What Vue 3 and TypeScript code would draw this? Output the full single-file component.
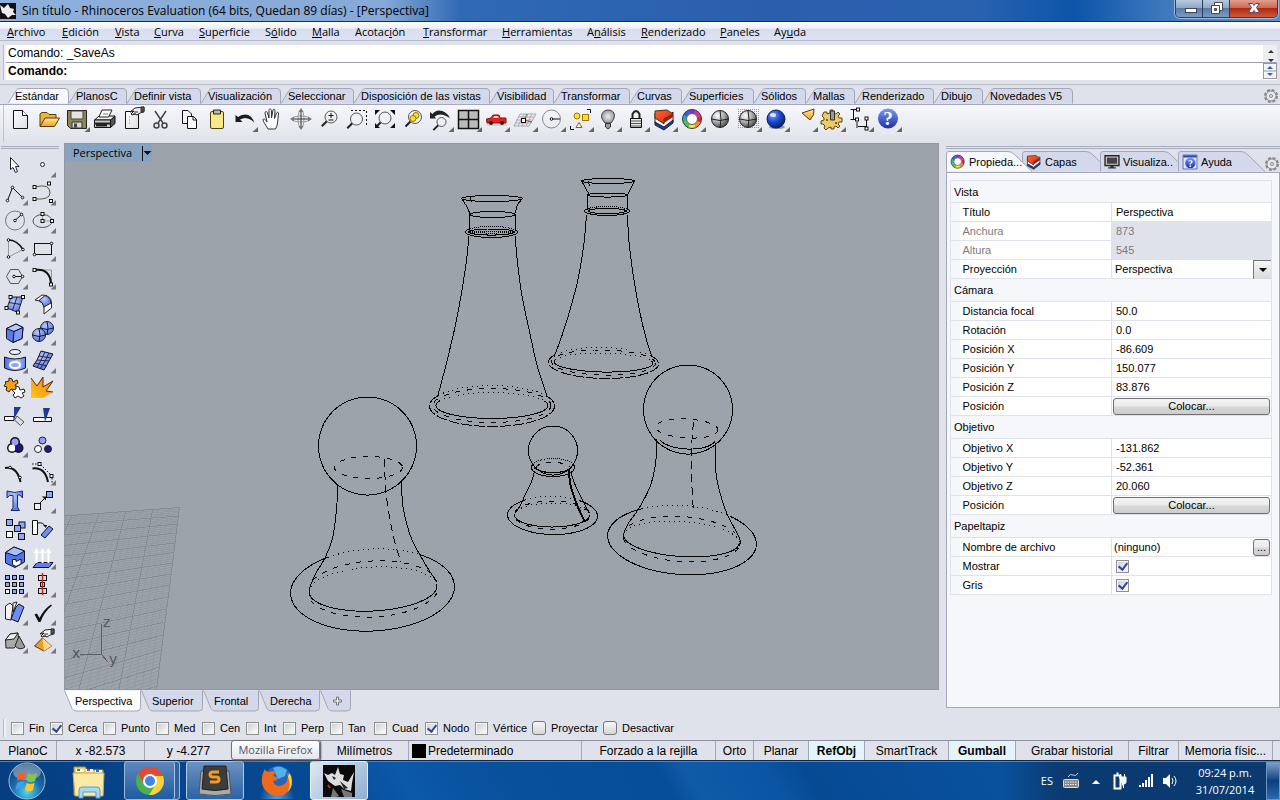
<script setup lang="ts">
import { ref } from 'vue'

type Segment = { text: string; key?: boolean }

function mnemonic(label: string): Segment[] {
  const i = label.indexOf('&')
  return [
    { text: label.slice(0, i) },
    { text: label[i + 1], key: true },
    { text: label.slice(i + 2) },
  ].filter((s) => s.text)
}

const menus = [
  '&Archivo', '&Edición', '&Vista', '&Curva', '&Superficie', 'S&ólido', '&Malla', 'Acotac&ión',
  '&Transformar', '&Herramientas', 'A&nálisis', '&Renderizado', '&Paneles', 'Ay&uda',
].map(mnemonic)

/* ---------- tab shapes ---------- */
interface Tab { label: string; w: number; icon?: string }

const toolTabs: Tab[] = [
  { label: 'Estándar', w: 61 },
  { label: 'PlanosC', w: 58 },
  { label: 'Definir vista', w: 74 },
  { label: 'Visualización', w: 80 },
  { label: 'Seleccionar', w: 73 },
  { label: 'Disposición de las vistas', w: 136 },
  { label: 'Visibilidad', w: 64 },
  { label: 'Transformar', w: 76 },
  { label: 'Curvas', w: 52 },
  { label: 'Superficies', w: 72 },
  { label: 'Sólidos', w: 52 },
  { label: 'Mallas', w: 49 },
  { label: 'Renderizado', w: 79 },
  { label: 'Dibujo', w: 49 },
  { label: 'Novedades V5', w: 90 },
]
const viewTabs: Tab[] = [
  { label: 'Perspectiva', w: 77 },
  { label: 'Superior', w: 62 },
  { label: 'Frontal', w: 56 },
  { label: 'Derecha', w: 61 },
  { label: '', w: 31 },
]
const panelTabs: Tab[] = [
  { label: 'Propieda...', w: 76, icon: 'wheel' },
  { label: 'Capas', w: 78, icon: 'layers' },
  { label: 'Visualiza..', w: 78, icon: 'monitor' },
  { label: 'Ayuda', w: 84, icon: 'helpBook' },
]
const topShape = (w: number) => `M0 15.5L8 2.5Q9.5 .5 12 .5H${w - 4}Q${w - 0.5} .5 ${w - 0.5} 4V15.5`
const bottomShape = (w: number) => `M.5 0L8 18Q9.5 20.5 12 20.5H${w - 4}Q${w - 0.5} 20.5 ${w - 0.5} 17V0`
const panelShape = (w: number, last: boolean) => {
  const top = last ? w - 17 : w - 10
  return `M.5 20.5V3Q.5 .5 3 .5H${top - 4}Q${top} .5 ${top + 3} 4L${top + 20} 20.5`
}

/* ---------- icons ---------- */
const O = 'stroke="#111" fill="none"'
const sq = (x: number, y: number, fill = '#fff', s = 3) =>
  `<rect x="${x - s / 2}" y="${y - s / 2}" width="${s}" height="${s}" fill="${fill}" stroke="#111"/>`
const dot = (x: number, y: number) => `<circle cx="${x}" cy="${y}" r="1.3" fill="#fff" stroke="#111"/>`
const lens = (x: number, y: number, r: number) =>
  `<path d="M${x - r * 0.7} ${y + r * 0.7}L${x - r * 0.7 - 5} ${y + r * 0.7 + 5}" stroke="#222" stroke-width="2"/><circle cx="${x}" cy="${y}" r="${r}" fill="#eef0f4" fill-opacity=".8" stroke="#555"/>`
const globe = (x: number, y: number, r: number, fill: string, line: string) =>
  `<circle cx="${x}" cy="${y}" r="${r}" fill="url(#${fill})" stroke="#222"/><path d="M${x - r} ${y}Q${x} ${y + 3} ${x + r} ${y}M${x} ${y - r}Q${x + 2} ${y} ${x} ${y + r}" fill="none" stroke="${line}"/>`
const pointer = (x: number, y: number) =>
  `<g transform="translate(${x} ${y})"><path d="M0 5L5 1 14 0v5l-4 1-3 2-2-1-3 1-1-1 3-3z" fill="#f2f2f2" stroke="#222"/><path d="M11 0v5l3-1V0zM4 5h4M3 7h3" fill="#555" stroke="#333"/></g>`
const wheelArt = (x: number, y: number, r: number) => {
  const colors = ['#e8252b', '#f0912b', '#f5e63a', '#53c23f', '#25b9b5', '#2d63e0', '#8232c8', '#d52fa0']
  const seg = colors.map((c, i) => {
    const a = ((i * 45 - 22) * Math.PI) / 180
    const b = ((i * 45 + 25) * Math.PI) / 180
    const p = (t: number) => `${(x + r * Math.cos(t)).toFixed(1)} ${(y + r * Math.sin(t)).toFixed(1)}`
    return `<path d="M${p(a)}A${r} ${r} 0 0 1 ${p(b)}" fill="none" stroke="${c}" stroke-width="4"/>`
  })
  return `${seg.join('')}<circle cx="${x}" cy="${y}" r="${r + 2}" fill="none" stroke="#333"/><circle cx="${x}" cy="${y}" r="${r - 2}" fill="#fff" stroke="#555"/>`
}
const layersArt = '<path d="M5 8L15 14 23 7V17L14 24 5 18z" fill="#fff" stroke="#222"/><path d="M5 17L14 22 23 15V18L14 25 5 20z" fill="#1d3e9c" stroke="#222"/><path d="M5 6L17 5 23 9 14 14V19L5 13z" fill="url(#gRed)" stroke="#431"/><path d="M14 14L23 9V12L14 18z" fill="#a01a10"/>'
const helpText = (x: number, y: number, size: number) =>
  `<text x="${x}" y="${y}" font-size="${size}" font-weight="700" font-family="Liberation Serif, serif" text-anchor="middle" fill="#fff">?</text>`

const icons: Record<string, string> = {
  new: '<path d="M7.5 5.500H16.500L21.500 10.500V23.500H7.500z" fill="url(#gPage)" stroke="#111"/><path d="M16.500 5.500V10.500H21.500" fill="#fff" stroke="#111"/>',
  open: '<path d="M6 21V9L8 7.500H13L15 9.500H22V13" fill="#e8b53d" stroke="#5d3a06"/><path d="M6 21.500L11 13H25.500L20.500 21.500z" fill="url(#gFold)" stroke="#5d3a06"/>',
  save: '<path d="M5.500 5.500H24.500V23.500H8.500L5.500 20.500z" fill="#8b8653" stroke="#222"/><path d="M9 6H21V14H9z" fill="#e4e4e0" stroke="#444"/><path d="M10 17H20V23H10z" fill="#d8d8d8" stroke="#333"/><path d="M12 18.500h3v4h-3z" fill="#444"/>',
  print: '<path d="M4.500 15L9 11H25L21 15z" fill="#eee" stroke="#111"/><path d="M9 12L12 5H22L18.500 12z" fill="#fff" stroke="#222"/><path d="M4.500 15H20.500V22.500H4.500z" fill="#ccc" stroke="#111"/><path d="M20.500 15L25 11V18.500L20.500 22.500z" fill="#555" stroke="#111"/><path d="M4 18.500H20.500M6 20.500H17" stroke="#222" stroke-width="2"/><path d="M13 9h5" stroke="#777"/>',
  props: '<path d="M7.500 6.500H20.500V23.500H7.500z" fill="url(#gPage)" stroke="#111"/><path d="M11 12h1M11 15h1M11 18h1" stroke="#888"/>' + pointer(12, 2),
  cut: '<path d="M9 6L17 18M20 6L12 18" stroke="#444" stroke-width="1.5" fill="none"/><circle cx="10.500" cy="20.500" r="2.500" fill="none" stroke="#444" stroke-width="1.5"/><circle cx="18.500" cy="20.500" r="2.500" fill="none" stroke="#444" stroke-width="1.5"/>',
  copy: '<path d="M8.500 5.500H14L17.500 9V18.500H8.500z" fill="#f6f6f8" stroke="#111"/><path d="M13.500 11.500H19.500L22.500 14.500V23.500H13.500z" fill="#fff" stroke="#111"/><path d="M19 11.500V15H22.500" fill="none" stroke="#111"/>',
  paste: '<rect x="8.500" y="6.500" width="13" height="17" rx="1.5" fill="#f7e988" stroke="#4e4310"/><path d="M11.500 5H18.500V9H11.500z" fill="#b9b9b0" stroke="#222"/>',
  undo: '<path d="M5.500 10V17H12.500L10 14.500Q16 11 22 15.500 25 18 24.500 18.500 22 9.500 15 9.500 11 9.500 8 12z" fill="#1c1c1c"/>',
  hand: '<path d="M10 24C8 20 5 17 5 14.500 6 13 8 15 9 17L7 8C7 6 9 6 9.500 8L11 13V5.500C11 3.500 13 3.500 13.500 5.500V13L15 5C15.500 3.500 17 4 17 6L16.500 13.500 18.500 8C19.500 6.500 21 7.500 20.500 9L19.500 18Q19 22 17.500 24z" fill="#fafafa" stroke="#333"/>',
  orbit: '<ellipse cx="15" cy="14" rx="9" ry="3" fill="none" stroke="#999"/><ellipse cx="15" cy="14" rx="3" ry="9" fill="none" stroke="#999"/><path d="M15 7v14M8 14h14" stroke="#333"/><path d="M15 3l2.500 4h-5zM15 25l2.500-4h-5zM4 14l4-2.500v5zM26 14l-4-2.500v5z" fill="#777"/>',
  zoom: lens(17, 12, 6) + '<path d="M17 8v5M14.500 10.500h5M14.500 15h5" stroke="#111"/>',
  zoomWin: '<path d="M9 5.500H24.500V20" fill="none" stroke="#111" stroke-dasharray="2 2"/>' + lens(14.5, 14, 6),
  zoomExt: lens(15, 13, 6) + '<path d="M5 5h5L5 10zM25 5v5l-5-5zM5 23v-5l5 5zM25 23h-5l5-5z" fill="#111"/>',
  zoomSel: lens(17, 12, 6.5) + '<circle cx="18" cy="10.500" r="3" fill="#ffe01b" stroke="#8a7a00"/><circle cx="15" cy="13.500" r="3" fill="#ffe01b" stroke="#8a7a00"/>',
  undoView: '<path d="M4 7V13.500H10L8.500 11.500Q14 7.500 21 11.500L24 13Q20 5.500 13 5.500 9 5.500 6.500 9z" fill="#222"/>' + lens(15.5, 17, 4.5),
  four: '<path d="M4.500 5.500H24.500V23.500H4.500z" fill="#bbb" stroke="#111" stroke-width="1.5"/><path d="M14.500 5V24M4 14.500H25" stroke="#111" stroke-width="1.5"/>',
  car: '<path d="M5 20h20" stroke="#bbb"/><path d="M4.500 14L9 13 11 10H17L18 13H24V18H5z" fill="#e32222" stroke="#8c0c0c"/><path d="M12 11h4l1 2h-6z" fill="#f7c1c1"/><circle cx="9" cy="18" r="2" fill="#222"/><circle cx="20" cy="18" r="2" fill="#222"/>',
  cplane: '<path d="M10 9H26L19 21H4zM8 12H24M6 15H22M5 18H21M14 9L8 21M18 9L12 21M22 9L16 21" fill="none" stroke="#aaa"/><path d="M14 15L22 17" stroke="#d22"/><path d="M14 15L17 9" stroke="#2a9a2a"/>' + sq(13.5, 15.5, '#fff', 4),
  circle: '<circle cx="13.500" cy="14" r="9" fill="none" stroke="#888"/><path d="M13.500 14H22" stroke="#111"/>' + dot(13.5, 14),
  shapes: '<path d="M21 4.500H24.500V8M4.500 21V24.500H8" fill="none" stroke="#111"/><circle cx="11" cy="11" r="3" fill="#ffe02a" stroke="#a67500"/><rect x="16.500" y="9.500" width="6" height="6" fill="#ffe02a" stroke="#a67500"/><path d="M13 17.500L16 22.500H10z" fill="#fff" stroke="#a3521f"/>',
  bulb: '<path d="M11 18Q7 14 7.500 10.500 9 5 14 5 20 5 20.500 10.500 20.500 14 17 18z" fill="url(#gBulb)" stroke="#444"/><path d="M11.500 18.500H16.500V22L14 24 11.500 22z" fill="#999" stroke="#333"/>',
  lock: '<path d="M10.500 14V9Q14 3 17.500 9V14" fill="none" stroke="#222" stroke-width="2"/><path d="M8.500 13.500H19.500V22.500H8.500z" fill="#e6e6e6" stroke="#111"/><path d="M9 16h10M9 18.500h10M9 21h10" stroke="#555"/>',
  layers: layersArt,
  wheel: wheelArt(14, 14, 7.5),
  shaded: globe(14, 14, 8.5, 'gGray', '#222'),
  shadedSel: '<path d="M3 4H25V24H3z" fill="url(#pDots)"/>' + globe(14, 14, 8.5, 'gGray', '#222'),
  render: '<ellipse cx="15" cy="22" rx="8" ry="2" fill="#999"/><circle cx="14" cy="14" r="9" fill="url(#gDeep)" stroke="#0b1a5c"/><ellipse cx="11" cy="10" rx="3" ry="2" fill="#fff" opacity=".8"/>',
  spot: '<path d="M12 8L24 4Q25 10 20 15z" fill="url(#gFold)" stroke="#5d3a06"/>',
  gears: '<path d="M6 7h3v2l3-1V5h3v3l3 1 2-2 2 2-2 2 1 2h3v4h-3l-1 2 2 2-2 2-2-2-2 1v2h-3v-2l-3 1-2 2-2-2 1-2-2-2-2 0v-3l3-1 0-2-2-2z" fill="#e8cb6a" stroke="#5b4408"/><path d="M12.500 6h4v9h-4z" fill="#999" stroke="#333"/><circle cx="9" cy="15" r="1" fill="#5b4408"/><circle cx="18" cy="18" r="1" fill="#5b4408"/>',
  dim: '<path d="M7.500 4.500V14.500M4.500 4.500H12M4.500 14.500H11M11 17V23M20.500 14V24M12 21.500H20" fill="none" stroke="#111"/>' + sq(12, 4.5) + sq(11, 14.5) + sq(20.5, 13.5) + sq(20.5, 23.5),
  help: '<circle cx="14" cy="13.500" r="10" fill="url(#gHelp)"/>' + helpText(14, 20, 19),

  arrow: '<path d="M9.500 7.500V19.500L12 17.500 14.500 22.500 16.500 21.500 14.500 16.500H18z" fill="#fff" stroke="#222"/>',
  point: '<circle cx="13.500" cy="14.500" r="2" fill="#fff" stroke="#222"/>',
  polyline: `<path d="M6.500 22.500L11.500 9.500 21.500 19.500" ${O}/>` + dot(6.5, 22.5) + dot(11.5, 9.5) + dot(21.5, 19.5),
  curve: '<path d="M6 9Q21 5 21 15 21 22 6 21" fill="none" stroke="#555"/>' + sq(5.5, 9) + sq(20, 5.5) + sq(5.5, 21) + sq(22, 23),
  circ: `<circle cx="14" cy="14.500" r="9.500" fill="none" stroke="#777"/><path d="M14 14.500L20.500 8.500" ${O}/>` + dot(14, 14.5) + dot(20.5, 8.5),
  ellipse: '<ellipse cx="13.500" cy="15" rx="9.500" ry="6.500" fill="none" stroke="#555"/><path d="M13.500 8V15H23" fill="none" stroke="#999"/>' + sq(13.5, 15) + sq(13.5, 8) + sq(23, 15),
  arc: '<path d="M7.500 6Q16 6 22 15.500" stroke="#111" stroke-width="1.5" fill="none"/><path d="M7.500 6V23L22 15.500" fill="none" stroke="#999"/>' + dot(7.5, 6) + dot(22, 15.5) + dot(7.5, 23),
  rect: '<rect x="5.500" y="9.500" width="17" height="11" fill="none" stroke="#111"/>' + dot(22.5, 9.5) + dot(5.5, 20.5),
  hex: `<path d="M5.500 14.500L9.500 7.500H17.500L21.500 14.500 17.500 21.500H9.500z" fill="none" stroke="#555"/><path d="M13 14.500H21" ${O}/>` + dot(13, 14.5) + dot(21.5, 14.5),
  fillet: '<path d="M6 8H22.500V22" fill="none" stroke="#999"/><path d="M6 8Q21 6 22 22" fill="none" stroke="#111" stroke-width="2"/>' + sq(5.5, 8) + sq(22, 22.5),
  surf: '<path d="M10 7H22L17 22.500 6 18z" fill="url(#gBlue)" stroke="#223"/><path d="M16 7L11.500 20M8 12.500L20 14.500" stroke="#223"/>' + sq(9.5, 7) + sq(22, 7) + sq(17, 22.5) + sq(5.5, 18),
  sweep: '<path d="M6 10L13 5Q22 5 22.500 13V18L15 24V18Q15 11 6 10z" fill="#fff" stroke="#222"/><path d="M10 10.500L16 5.500Q21 7 22 13L15 17Q14 12 10 10.500z" fill="url(#gBlue)" stroke="#223"/>',
  box: '<path d="M5.500 10.500L15 6 22 9.500 21 20.500 12 24.500 5.500 20.500z" fill="#5b78f0" stroke="#112"/><path d="M5.500 10.500L15 6 22 9.500 13 13.500z" fill="#b9c8ff" stroke="#112"/><path d="M13 13.500L12 24.500 21 20.500 22 9.500z" fill="#7f97f6" stroke="#112"/>',
  spheres: globe(18, 10, 6.5, 'gBlue', '#114') + globe(10, 17, 6.5, 'gBlue', '#114'),
  pipe: '<ellipse cx="14" cy="6" rx="5.500" ry="2.500" fill="#eef" stroke="#222"/><path d="M3.500 11Q14 15 24.500 11V22Q14 27 3.500 22z" fill="url(#gBlueH)" stroke="#112"/><ellipse cx="14" cy="19" rx="5" ry="3" fill="#8fa6f8" stroke="#fff" stroke-width="2"/>',
  mesh: '<path d="M12 5L24 8 20 15 15 24 4 20 8 14z" fill="url(#gBlue)" stroke="#112"/><path d="M8 14L20 15M16 6L12 14 8 22M20 7L16 15 11 23M10 10L22 12M6 17L18 20" fill="none" stroke="#224"/>',
  puzzle: '<path d="M4 8l4-1V4l3 1 1 3 4-2 1 3-3 2 2 3-3 3-3-2-2 3-3-2 1-3-3-1 2-3z" fill="#f6a01a" stroke="#222"/><path d="M11 16l4-1v-3l3 1 1 3 4-1 1 3-3 1 2 3-3 2-3-2-3 2-2-3 2-2z" fill="#fff" stroke="#222"/>',
  explode: '<path d="M2 24V4L8 12 14 3V13L24 7 17 17 24 18 14 24z" fill="url(#gFire)"/><path d="M2 4L8 12 14 3V13L24 7 17 17 24 18" fill="none" stroke="#5a2a00"/>',
  trim: '<path d="M3.500 14.500H13V18.500H3.500z" fill="#fff" stroke="#111"/><path d="M13 5H20L13 17z" fill="#1f3a8f"/><path d="M16 14L23 20 19.500 23.500 13.500 18z" fill="#ddd" stroke="#555"/>',
  split: '<path d="M4.500 15.500H22.500V19.500H4.500z" fill="#fff" stroke="#111"/><path d="M14 6H21L16 20z" fill="#1f3a8f"/>',
  group: '<circle cx="14" cy="12" r="5" fill="#111"/><circle cx="11" cy="18" r="5" fill="#111"/><circle cx="17.500" cy="18" r="5" fill="#111"/><circle cx="14" cy="12" r="3.500" fill="#9c9cff"/><circle cx="11" cy="18" r="3.500" fill="#fff"/><circle cx="17.500" cy="18" r="3.500" fill="#1c1a80"/>',
  ungroup: '<circle cx="13.500" cy="10.500" r="3.500" fill="#9c9cff" stroke="#222"/><circle cx="9" cy="19" r="3.500" fill="#fff" stroke="#222"/><circle cx="19" cy="19" r="3.500" fill="#1c1a80" stroke="#222"/>',
  editPts: '<path d="M4 10Q16 8 19.500 24" fill="none" stroke="#111" stroke-width="2"/>' + dot(9, 9.5) + dot(19, 19.5),
  ctrlPts: '<path d="M3.500 10.500Q16 9 19 24" fill="none" stroke="#111" stroke-width="2"/><path d="M3 6H11L23 18V25" fill="none" stroke="#111" stroke-dasharray="1.5 1.5"/>' + sq(10.5, 6) + sq(22.5, 18),
  text: '<path d="M6 5Q14 8 21.500 5V12L19 9H16.500V21L18.500 24.500H10L12 21.500V9.500H8.500L6 12z" fill="url(#gBlue)" stroke="#1a2a6a"/>',
  move: '<path d="M10 18L17 11" stroke="#111"/><path d="M17 10.500v4l-4-4z" fill="#111"/>' + sq(8.5, 20.5, '#eee', 6) + sq(20.5, 8.5, '#8ea5ff', 6),
  copies: sq(8.5, 8.5, '#8ea5ff', 6) + sq(21, 11, '#8ea5ff', 6) + sq(16.5, 14.5, '#8ea5ff', 6) + sq(8.5, 20.5, '#fff', 6) + sq(20.5, 22.5, '#8ea5ff', 6),
  rotate: '<path d="M3.500 6.500H8.500V20.500H3.500z" fill="#fff" stroke="#111"/><path d="M9 9Q14 8 16 12" fill="none" stroke="#111"/><path d="M17 14l-3-3h4z" fill="#111"/><path d="M12 21L20 12 24 15 16 24z" fill="#6f8df5" stroke="#111"/>',
  solidEdit: '<path d="M4.500 10.500L13 5 23.500 9V20L14 25.500 4.500 21z" fill="#4f74ee" stroke="#112"/><path d="M4.500 10.500L13 5 23.500 9 15 14z" fill="#a9bfff" stroke="#112"/><path d="M11.500 17.500H15V19.500L20 17V22L15 24.500 11.500 22.500z" fill="#fff" stroke="#112"/>',
  extrude: '<path d="M8 20.500H24L20 25.500H4z" fill="#5f7ff2" stroke="#112"/><path d="M7.500 21V9M13.500 21V9M19.500 21V9" stroke="#fff" stroke-width="2"/><path d="M7.500 6l3 5h-6zM13.500 6l3 5h-6zM19.500 6l3 5h-6z" fill="#fff"/>',
  array: [7.5, 14.5, 21.5].map((y) => [6.5, 13.5, 20.5].map((x) => sq(x, y, x === 6.5 && y === 21.5 ? '#fff' : '#8ea5ff', 4)).join('')).join(''),
  align: '<rect x="9.500" y="5.500" width="8" height="5" fill="#ddd" stroke="#111"/><rect x="11.500" y="12.500" width="4" height="4" fill="#ddd" stroke="#111"/><rect x="9.500" y="18.500" width="8" height="5" fill="#ddd" stroke="#111"/><path d="M13.500 3V25" stroke="#d02020" stroke-width="1.5"/>',
  sheets: '<path d="M4.500 8L9 5 12 8 10 22 4.500 21z" fill="#f2f2f2" stroke="#222"/><path d="M12 5L16 4 12 14z" fill="#fff" stroke="#222"/><path d="M15 9L18 6 23 9 17 24 10 21z" fill="#6f8df5" stroke="#112"/>',
  check: '<path d="M5.500 16.500L8 15.500 10.500 20Q15 11 22 6.500L23 7.500Q15 14 11.500 24H9.500z" fill="#111"/>',
  solids: '<path d="M4.500 14L9 8 17 7 18 17 13 22H5z" fill="#aaa" stroke="#222"/><path d="M4.500 14L13 13 17 7 9 8z" fill="#eee" stroke="#222"/><path d="M18 10L24 21Q19 25 14 20z" fill="#999" stroke="#222"/>',
  pyramid: '<path d="M13.500 12L22.500 20 15 25 5.500 20z" fill="#e89f2c" stroke="#5d3a06"/><path d="M13.500 12L22.500 20 15 25z" fill="#ffd98c"/>' + pointer(11, 3),
  monitor: '<path d="M4.500 5.500H24.500V19.500H4.500z" fill="#ddd" stroke="#222" stroke-width="2"/><path d="M7 8H22V17H7z" fill="#444"/><path d="M12 20h5v2h3v2H9v-2h3z" fill="#333"/>',
  helpBook: '<path d="M4.500 4.500H24.500V24.500H4.500z" fill="#dfe8ff" stroke="#2b4590"/><path d="M5 5H24V8H5z" fill="#1d45c0"/><circle cx="15" cy="16" r="7.500" fill="url(#gHelp)"/>' + helpText(15, 21, 14),
}

interface Tool { icon: string; name: string; more?: boolean }
const tool = (spec: string): Tool => {
  const more = spec.endsWith('+')
  const [icon, name] = spec.replace('+', '').split(':')
  return { icon, name, more }
}
const standardTools = [
  'new:Nuevo', 'open:Abrir', 'save:Guardar+', 'print:Imprimir', 'props:Propiedades', 'cut:Cortar', 'copy:Copiar',
  'paste:Pegar', 'undo:Deshacer+', 'hand:Encuadrar', 'orbit:Rotar vista', 'zoom:Zoom dinámico', 'zoomWin:Zoom ventana',
  'zoomExt:Zoom extensión', 'zoomSel:Zoom selección', 'undoView:Deshacer vista+', 'four:Cuatro vistas+', 'car:Vista lateral+',
  'cplane:Plano de construcción+', 'circle:Referencias+', 'shapes:Seleccionar+', 'bulb:Ocultar+', 'lock:Bloquear+',
  'layers:Capas+', 'wheel:Propiedades de objeto+', 'shaded:Sombreado', 'shadedSel:Sombrear selección+', 'render:Renderizar+',
  'spot:Foco+', 'gears:Opciones+', 'dim:Acotar+', 'help:Ayuda+',
].map(tool)
const sideTools = [
  'arrow:Selección', 'point:Punto+', 'polyline:Polilínea+', 'curve:Curva+', 'circ:Círculo+', 'ellipse:Elipse+', 'arc:Arco+',
  'rect:Rectángulo+', 'hex:Polígono+', 'fillet:Empalme+', 'surf:Superficie+', 'sweep:Barrido+', 'box:Caja+', 'spheres:Booleana+',
  'pipe:Proyectar curva+', 'mesh:Malla+', 'puzzle:Unir', 'explode:Descomponer', 'trim:Recortar', 'split:Partir', 'group:Agrupar+',
  'ungroup:Desagrupar', 'editPts:Puntos de edición', 'ctrlPts:Puntos de control+', 'text:Texto', 'move:Mover+', 'copies:Copiar objetos',
  'rotate:Rotar', 'solidEdit:Editar sólido+', 'extrude:Extruir+', 'array:Matriz+', 'align:Alinear+', 'sheets:Desplegar+',
  'check:Comprobar+', 'solids:Sólidos+', 'pyramid:Pirámide+',
].map(tool)

/* ---------- viewport wireframes ---------- */
type Pt = [number, number]
interface Ring { c: Pt; r: Pt; rot?: number; from?: number; to?: number; line?: string }
interface Stroke { d: string; line: string }

function ring({ c, r, rot = 0, from = 0, to = 360, line = 'solid' }: Ring): Stroke {
  const t = (rot * Math.PI) / 180
  const pts: string[] = []
  const n = Math.ceil((to - from) / 4)
  for (let i = 0; i <= n; i++) {
    const a = ((from + ((to - from) * i) / n) * Math.PI) / 180
    const x = r[0] * Math.cos(a)
    const y = r[1] * Math.sin(a)
    pts.push(`${(c[0] + x * Math.cos(t) - y * Math.sin(t)).toFixed(1)} ${(c[1] + x * Math.sin(t) + y * Math.cos(t)).toFixed(1)}`)
  }
  return { d: 'M' + pts.join('L'), line }
}

/* smooth curve through the given points */
function spline(line: string, ...p: Pt[]): Stroke {
  let d = `M${p[0].join(' ')}`
  for (let i = 0; i < p.length - 1; i++) {
    const a = p[i - 1] ?? p[i]
    const b = p[i]
    const c = p[i + 1]
    const e = p[i + 2] ?? c
    d += `C${[b[0] + (c[0] - a[0]) / 6, b[1] + (c[1] - a[1]) / 6, c[0] - (e[0] - b[0]) / 6, c[1] - (e[1] - b[1]) / 6, ...c]
      .map((v) => v.toFixed(1)).join(' ')}`
  }
  return { d, line }
}

const strokes: Stroke[] = [
  // pawn, left
  ring({ c: [367.5, 446], r: [49, 49] }),
  ring({ c: [368.5, 467.5], r: [34, 11], line: 'dash' }),
  spline('fall', [384.5, 459], [385, 477], [386, 493], [390, 520], [395, 543], [401, 562]),
  spline('solid', [337.5, 484], [337, 503], [335, 523], [332, 540], [325, 558], [316, 573], [310, 587], [309, 592]),
  spline('solid', [401.5, 481], [402.5, 503], [406.5, 523], [412, 540], [419.5, 554], [427, 567], [437, 582]),
  ring({ c: [373, 589], r: [64, 22], rot: -3, from: -5, to: 183 }),
  ring({ c: [373, 589], r: [64, 22], rot: -3, from: 183, to: 355, line: 'dots' }),
  ring({ c: [373, 589], r: [66, 28], rot: -3, from: 15, to: 168, line: 'dash' }),
  ring({ c: [373, 589], r: [66, 28], rot: -3, from: 205, to: 335, line: 'dash' }),
  ring({ c: [372.5, 590], r: [82, 41], rot: -3, from: -53, to: 239 }),
  ring({ c: [372.5, 590], r: [82, 41], rot: -3, from: 239, to: 307, line: 'dots' }),
  // pawn, right
  ring({ c: [688, 409.5], r: [44.5, 44.5] }),
  ring({ c: [687, 428.5], r: [31, 9.5], rot: 3, line: 'dash' }),
  ring({ c: [687, 437], r: [29, 12], rot: 3, from: 15, to: 160 }),
  spline('fall', [693.5, 422], [692, 440], [691.5, 467], [692, 488], [693.5, 512]),
  spline('solid', [656.5, 439], [656.5, 453], [654.5, 470], [649.5, 488], [638.5, 509], [628.5, 523], [623.5, 535], [624.5, 541]),
  spline('solid', [715.5, 443], [716, 473], [720, 493], [727.5, 515], [739.5, 538], [739.5, 546]),
  ring({ c: [681.5, 539], r: [58, 17.5], rot: 4, from: 0, to: 180 }),
  ring({ c: [681.5, 539], r: [58, 17.5], rot: 4, from: 180, to: 360, line: 'dots' }),
  ring({ c: [681.5, 539], r: [59, 22.5], rot: 4, from: 12, to: 165, line: 'dash' }),
  ring({ c: [681.5, 539], r: [59, 22.5], rot: 4, from: 205, to: 335, line: 'dash' }),
  ring({ c: [682, 540], r: [74.5, 34.5], rot: 4, from: -52, to: 236 }),
  ring({ c: [682, 540], r: [74.5, 34.5], rot: 4, from: 236, to: 308, line: 'dots' }),
  // pawn, small
  ring({ c: [553, 450.5], r: [24.5, 24.5] }),
  ring({ c: [553, 467.5], r: [21.5, 9], from: -20, to: 200 }),
  ring({ c: [553, 467.5], r: [21.5, 9], from: 200, to: 340, line: 'tight' }),
  ring({ c: [553, 467.5], r: [17, 5], from: 0, to: 180 }),
  ring({ c: [553, 467.5], r: [17, 5], from: 180, to: 360, line: 'dash' }),
  ring({ c: [553, 466], r: [19, 7], from: 10, to: 170, line: 'dash' }),
  spline('solid', [534, 473], [531.5, 482], [526, 493], [520, 506], [515, 513]),
  spline('solid', [571, 473], [576, 487], [585, 505], [589.5, 513]),
  spline('bold', [568.5, 469], [571, 487], [577.5, 506], [584.5, 521]),
  ring({ c: [552, 515], r: [37.5, 12], from: 0, to: 180 }),
  ring({ c: [552, 515], r: [37.5, 12], from: 180, to: 360, line: 'dots' }),
  ring({ c: [552, 515], r: [38, 14], from: 15, to: 165, line: 'dash' }),
  ring({ c: [552, 515], r: [38, 14], from: 195, to: 345, line: 'dash' }),
  ring({ c: [552.5, 515.5], r: [45, 19], rot: 1, from: -55, to: 232 }),
  ring({ c: [552.5, 515.5], r: [45, 19], rot: 1, from: 232, to: 305, line: 'dots' }),
  // vase, left
  ring({ c: [492, 198.5], r: [30.5, 3] }),
  spline('solid', [462, 199], [467, 207], [470, 214]),
  spline('solid', [522, 199], [517.5, 205], [515.5, 213]),
  spline('dash', [470, 197], [473, 206]),
  ring({ c: [492.5, 214.5], r: [22.5, 3] }),
  spline('solid', [469.5, 214], [469.5, 231]),
  spline('solid', [515.5, 214], [515.5, 231]),
  ring({ c: [491.5, 232], r: [26, 5.5], from: -25, to: 205 }),
  ring({ c: [491.5, 232], r: [26, 5.5], from: 205, to: 335, line: 'tight' }),
  ring({ c: [491.5, 232], r: [23, 3] }),
  ring({ c: [491.5, 232], r: [21, 1], line: 'tight' }),
  spline('solid', [469, 236], [466.5, 260], [461.5, 293], [455, 327], [446.5, 363], [437.5, 397]),
  spline('solid', [515.5, 236], [516.5, 253], [521.5, 293], [528.5, 327], [537.5, 367], [547.5, 397]),
  ring({ c: [492, 405.5], r: [56, 13], from: -20, to: 200 }),
  ring({ c: [492, 405.5], r: [56, 13], from: 200, to: 340, line: 'dots' }),
  ring({ c: [492, 405.5], r: [59, 17], line: 'dash' }),
  ring({ c: [492, 406], r: [62.5, 20.5], from: -31, to: 211, line: 'long' }),
  ring({ c: [492, 406], r: [62.5, 20.5], from: 211, to: 329, line: 'dots' }),
  // vase, right
  ring({ c: [608, 181], r: [26.5, 2.5] }),
  spline('solid', [582, 181.5], [586.5, 190], [590, 195]),
  spline('solid', [634, 182], [629.5, 191], [627.5, 195]),
  spline('dash', [588, 181], [591, 190]),
  ring({ c: [607.5, 195], r: [20, 2] }),
  spline('solid', [587.5, 195], [587.5, 210]),
  spline('solid', [627.5, 195], [627.5, 210]),
  ring({ c: [607, 211], r: [22.5, 4.5], from: -25, to: 205 }),
  ring({ c: [607, 211], r: [22.5, 4.5], from: 205, to: 335, line: 'tight' }),
  ring({ c: [607, 211], r: [19, 2.5] }),
  spline('solid', [586.5, 215], [584, 243], [578.5, 277], [570, 310], [561.5, 337], [554, 357]),
  spline('solid', [627.5, 215], [629, 242], [633.5, 277], [640, 313], [646.5, 340], [652, 357]),
  ring({ c: [603.5, 362.5], r: [49.5, 9.5], rot: 1, from: -15, to: 195 }),
  ring({ c: [603.5, 362.5], r: [49.5, 9.5], rot: 1, from: 195, to: 345, line: 'dots' }),
  ring({ c: [603.5, 362.5], r: [52, 12.5], rot: 1, line: 'dash' }),
  ring({ c: [603.5, 363], r: [55, 15.5], rot: 1, from: -31, to: 211, line: 'long' }),
  ring({ c: [603.5, 363], r: [55, 15.5], rot: 1, from: 211, to: 329, line: 'dots' }),
]

/* construction plane grid, clipped at the viewport's edges */
const corner: Pt = [179.5, 507.5]
const foot: Pt = [156.5, 690]
const rowRight = [507.5, 516, 524, 533, 543, 552.5, 563, 574, 585, 597, 609, 622, 635, 650, 667, 686, 706]
const rowLeft = [516, 525, 535, 545.5, 556, 567.5, 579, 591.5, 604.5, 617.5, 631, 645, 660, 678, 697, 717, 738]
const edgeX = (y: number) => corner[0] + ((foot[0] - corner[0]) * (y - corner[1])) / (foot[1] - corner[1])
const rowLine = (l: number, r: number) => `M64 ${l.toFixed(1)}L${edgeX(r).toFixed(1)} ${r.toFixed(1)}`
const colLine = (i: number) => `M${corner[0] - 26.8 * i} ${corner[1] + 1.9 * i}L${foot[0] - 36.5 * i - i * i * 1.2} ${foot[1]}`
const gridMajor = [
  ...rowRight.map((r, i) => rowLine(rowLeft[i], r)),
  ...[0, 1, 2, 3, 4].map(colLine),
].join('')
const gridMinor = [
  ...rowRight.slice(0, -1).flatMap((r, i) =>
    [0.2, 0.4, 0.6, 0.8].map((k) => rowLine(rowLeft[i] + (rowLeft[i + 1] - rowLeft[i]) * k, r + (rowRight[i + 1] - r) * k)),
  ),
  ...Array.from({ length: 24 }, (_, i) => colLine(i / 5)),
].join('')

/* ---------- properties ---------- */
interface Prop { label: string; kind?: 'text' | 'disabled' | 'select' | 'button' | 'file' | 'check'; value?: string }
interface Section { title: string; rows: Prop[] }
const sections: Section[] = [
  { title: 'Vista', rows: [
    { label: 'Título', value: 'Perspectiva' },
    { label: 'Anchura', value: '873', kind: 'disabled' },
    { label: 'Altura', value: '545', kind: 'disabled' },
    { label: 'Proyección', value: 'Perspectiva', kind: 'select' },
  ] },
  { title: 'Cámara', rows: [
    { label: 'Distancia focal', value: '50.0' },
    { label: 'Rotación', value: '0.0' },
    { label: 'Posición X', value: '-86.609' },
    { label: 'Posición Y', value: '150.077' },
    { label: 'Posición Z', value: '83.876' },
    { label: 'Posición', value: 'Colocar...', kind: 'button' },
  ] },
  { title: 'Objetivo', rows: [
    { label: 'Objetivo X', value: '-131.862' },
    { label: 'Objetivo Y', value: '-52.361' },
    { label: 'Objetivo Z', value: '20.060' },
    { label: 'Posición', value: 'Colocar...', kind: 'button' },
  ] },
  { title: 'Papeltapiz', rows: [
    { label: 'Nombre de archivo', value: '(ninguno)', kind: 'file' },
    { label: 'Mostrar', kind: 'check' },
    { label: 'Gris', kind: 'check' },
  ] },
]

const snaps = ref([
  { label: 'Fin', on: false }, { label: 'Cerca', on: true }, { label: 'Punto', on: false }, { label: 'Med', on: false },
  { label: 'Cen', on: false }, { label: 'Int', on: false }, { label: 'Perp', on: false }, { label: 'Tan', on: false },
  { label: 'Cuad', on: false }, { label: 'Nodo', on: true }, { label: 'Vértice', on: false },
  { label: 'Proyectar', on: false, push: true }, { label: 'Desactivar', on: false, push: true },
])

const status = [
  { text: 'PlanoC' }, { text: 'x -82.573' }, { text: 'y -4.277' }, { text: '' }, { text: 'Milímetros' },
  { text: 'Predeterminado', swatch: true }, { text: 'Forzado a la rejilla' }, { text: 'Orto' }, { text: 'Planar' },
  { text: 'RefObj', on: true }, { text: 'SmartTrack' }, { text: 'Gumball', on: true }, { text: 'Grabar historial' },
  { text: 'Filtrar' }, { text: 'Memoria físic...' },
]
</script>

<template>
  <div class="app">
    <svg class="defs" width="0" height="0" aria-hidden="true">
      <defs>
        <linearGradient id="gPage" x1="0" y1="0" x2="1" y2="1"><stop offset="0" stop-color="#fff" /><stop offset="1" stop-color="#dcdde2" /></linearGradient>
        <linearGradient id="gFold" x1="0" y1="0" x2="0" y2="1"><stop offset="0" stop-color="#ffe9a0" /><stop offset="1" stop-color="#f0a018" /></linearGradient>
        <linearGradient id="gRed" x1="0" y1="0" x2="1" y2="1"><stop offset="0" stop-color="#ff6a33" /><stop offset="1" stop-color="#d81c10" /></linearGradient>
        <radialGradient id="gBulb"><stop offset="0" stop-color="#eee" /><stop offset="1" stop-color="#999" /></radialGradient>
        <radialGradient id="gGray" cx=".35" cy=".3" r=".8"><stop offset="0" stop-color="#fff" /><stop offset=".5" stop-color="#aaa" /><stop offset="1" stop-color="#333" /></radialGradient>
        <radialGradient id="gDeep" cx=".35" cy=".3" r=".8"><stop offset="0" stop-color="#6d9bff" /><stop offset=".5" stop-color="#1b45c8" /><stop offset="1" stop-color="#081858" /></radialGradient>
        <radialGradient id="gBlue" cx=".4" cy=".3" r=".8"><stop offset="0" stop-color="#b9c9ff" /><stop offset="1" stop-color="#4a68e0" /></radialGradient>
        <linearGradient id="gBlueH"><stop offset="0" stop-color="#4a6ae8" /><stop offset=".6" stop-color="#b9c9ff" /><stop offset="1" stop-color="#6080ee" /></linearGradient>
        <linearGradient id="gHelp" x1="0" y1="0" x2="0" y2="1"><stop offset="0" stop-color="#7c98ee" /><stop offset="1" stop-color="#1d2fa8" /></linearGradient>
        <linearGradient id="gFire" x1="1" y1="0" x2="0" y2="1"><stop offset="0" stop-color="#ff7a00" /><stop offset="1" stop-color="#ffc81e" /></linearGradient>
        <pattern id="pDots" width="2" height="2" patternUnits="userSpaceOnUse"><rect width="1" height="1" fill="#999" /></pattern>
      </defs>
    </svg>

    <header class="titlebar">
      <svg class="app-icon" viewBox="0 0 16 16" aria-hidden="true"><rect width="16" height="16" fill="#111" /><path d="M0 2L4 5 8 1 10 5 14 6 13 9 16 12 12 12 8 15 5 11 2 10z" fill="#eee" /></svg>
      <h1>Sin título - Rhinoceros Evaluation (64 bits, Quedan 89 días) - [Perspectiva]</h1>
      <div class="win-buttons">
        <button type="button" aria-label="Minimizar"><svg viewBox="0 0 28 17"><rect x="9.500" y="8.500" width="11" height="4" fill="#fff" stroke="#445" /></svg></button>
        <button type="button" aria-label="Restaurar"><svg viewBox="0 0 28 17"><path d="M11.500 2.500H19.500V10.500H11.500z" fill="#fff" stroke="#445" /><path d="M8.500 5.500H16.500V13.500H8.500z" fill="#fff" stroke="#445" /><path d="M11.500 8.500H13.500V10.500H11.500z" fill="#678" stroke="#445" /></svg></button>
        <button type="button" class="close" aria-label="Cerrar"><svg viewBox="0 0 47 17"><path d="M18.500 3.500H22.500L24 5.500 25.500 3.500H29.500L26.500 7.500 29.500 12.500H25.500L24 10.500 22.500 12.500H18.500L21.500 7.500z" fill="#fff" stroke="#645" /></svg></button>
      </div>
    </header>

    <nav class="menu">
      <button v-for="(m, i) in menus" :key="i" type="button"><span v-for="(s, j) in m" :key="j" :class="{ key: s.key }">{{ s.text }}</span></button>
    </nav>

    <section class="command">
      <div class="history">Comando: _SaveAs<svg viewBox="0 0 14 17" aria-hidden="true"><rect width="14" height="17" fill="#eee" /><path d="M5 8h6L8 5zM5 14h6l-3 3z" fill="#333" /></svg></div>
      <div class="prompt">
        <label for="cmd">Comando:</label><input id="cmd" type="text" />
        <svg viewBox="0 0 14 17" aria-hidden="true"><rect x=".5" y=".5" width="13" height="15" fill="#f4f5f8" stroke="#999" /><path d="M0 8h14" stroke="#999" /><path d="M4 6h6L7 3zM4 10h6l-3 3z" fill="#3b5bb8" /></svg>
      </div>
    </section>

    <section class="toolbar">
      <div class="tool-tabs">
        <button v-for="(t, i) in toolTabs" :key="t.label" type="button" class="tab" :class="{ active: i === 0 }" :style="{ width: t.w + 'px' }">
          <svg class="tab-shape" :viewBox="`0 0 ${t.w} 16`" aria-hidden="true"><path :d="topShape(t.w)" /></svg>
          <span>{{ t.label }}</span>
        </button>
        <button type="button" class="gear" aria-label="Opciones de barra"><svg viewBox="0 0 16 16"><circle cx="8" cy="8" r="6" fill="none" stroke="#888" stroke-width="2" stroke-dasharray="3 1.700" /><circle cx="8" cy="8" r="5" fill="#e8e9ee" stroke="#888" /><circle cx="8" cy="8" r="1.500" fill="none" stroke="#888" /></svg></button>
      </div>
      <div class="tools">
        <button v-for="t in standardTools" :key="t.name" type="button" class="tool" :aria-label="t.name">
          <svg viewBox="0 0 28 28"><g v-html="icons[t.icon]" /><path v-if="t.more" d="M28 22V27H22.500z" fill="#666" /></svg>
        </button>
      </div>
    </section>

    <main class="work">
      <aside class="side-tools">
        <div class="side-grid">
          <button v-for="t in sideTools" :key="t.name" type="button" class="tool" :aria-label="t.name">
            <svg viewBox="0 0 28 28"><g v-html="icons[t.icon]" /><path v-if="t.more" d="M27 22V27.500H21.500z" fill="#777" /></svg>
          </button>
        </div>
      </aside>

      <section class="center">
        <div class="viewport">
          <svg class="scene" viewBox="64 143 875 546" preserveAspectRatio="xMinYMin meet">
            <path class="minor" :d="gridMinor" />
            <path class="major" :d="gridMajor" />
            <path v-for="(s, i) in strokes" :key="i" :d="s.d" class="wire" :class="s.line" />
            <path class="axis" d="M101.500 624V654.500H80M101.500 654.500L108 662" />
            <g class="axis-label"><text x="72" y="658">x</text><text x="103" y="627">z</text><text x="109" y="664">y</text></g>
          </svg>
          <button type="button" class="view-title"><span>Perspectiva</span><svg viewBox="0 0 11 18" aria-hidden="true"><path d="M1.500 2V17" stroke="#111" /><path d="M2.500 7H10.500L6.500 11z" fill="#111" /></svg></button>
        </div>
        <div class="view-tabs">
          <button v-for="(t, i) in viewTabs" :key="i" type="button" class="tab" :class="{ active: i === 0 }" :style="{ width: t.w + 'px' }" :aria-label="t.label || 'Nueva vista'">
            <svg class="tab-shape" :viewBox="`0 0 ${t.w} 21`" aria-hidden="true"><path :d="bottomShape(t.w)" /><path v-if="!t.label" class="plus" d="M16.500 6.500H18.500V9.500H21.500V11.500H18.500V14.500H16.500V11.500H13.500V9.500H16.500z" /></svg>
            <span>{{ t.label }}</span>
          </button>
        </div>
      </section>

      <aside class="panel">
        <div class="panel-tabs">
          <button v-for="(t, i) in panelTabs" :key="t.label" type="button" class="tab" :class="{ active: i === 0 }" :style="{ width: t.w + 'px' }">
            <svg class="tab-shape" :viewBox="`0 0 ${t.w} 21`" aria-hidden="true"><path :d="panelShape(t.w, i === 3)" /></svg>
            <svg class="tab-icon" viewBox="3 3 23 23" aria-hidden="true" v-html="icons[t.icon ?? '']" />
            <span>{{ t.label }}</span>
          </button>
          <button type="button" class="gear" aria-label="Opciones de panel"><svg viewBox="0 0 16 16"><circle cx="8" cy="8" r="6" fill="none" stroke="#888" stroke-width="2" stroke-dasharray="3 1.700" /><circle cx="8" cy="8" r="5" fill="#e8e9ee" stroke="#888" /><circle cx="8" cy="8" r="1.500" fill="none" stroke="#888" /></svg></button>
        </div>
        <div class="panel-body">
          <table>
            <colgroup><col class="c-gutter" /><col class="c-name" /><col /></colgroup>
            <tbody v-for="(s, si) in sections" :key="s.title">
              <tr class="section"><th colspan="3" scope="rowgroup">{{ s.title }}</th></tr>
              <tr v-for="(r, ri) in s.rows" :key="ri" :class="{ off: r.kind === 'disabled' }">
                <td class="gutter"></td>
                <th scope="row"><label :for="`p-${si}-${ri}`">{{ r.label }}</label></th>
                <td class="value">
                  <button v-if="r.kind === 'button'" :id="`p-${si}-${ri}`" type="button" class="push">{{ r.value }}</button>
                  <div v-else-if="r.kind === 'select'" class="drop"><select :id="`p-${si}-${ri}`"><option>{{ r.value }}</option></select></div>
                  <input v-else-if="r.kind === 'check'" :id="`p-${si}-${ri}`" type="checkbox" class="tick" checked />
                  <div v-else-if="r.kind === 'file'" class="file"><input :id="`p-${si}-${ri}`" type="text" :value="r.value" /><button type="button" class="push">...</button></div>
                  <input v-else :id="`p-${si}-${ri}`" type="text" :value="r.value" :disabled="r.kind === 'disabled'" />
                </td>
              </tr>
            </tbody>
          </table>
        </div>
      </aside>
    </main>

    <section class="snaps">
      <label v-for="s in snaps" :key="s.label"><input v-model="s.on" type="checkbox" :class="s.push ? 'pushbox' : 'tick'" /><span>{{ s.label }}</span></label>
    </section>

    <section class="status">
      <button v-for="(s, i) in status" :key="i" type="button" :class="{ on: s.on, layer: s.swatch }"><i v-if="s.swatch" class="swatch"></i>{{ s.text }}</button>
      <div class="tip" role="tooltip">Mozilla Firefox</div>
    </section>

    <footer class="taskbar">
      <button type="button" class="start" aria-label="Inicio">
        <svg viewBox="0 0 40 40"><defs><radialGradient id="orb" cx=".5" cy=".8" r=".8"><stop offset="0" stop-color="#4fd8f5" /><stop offset=".5" stop-color="#1c6ba8" /><stop offset="1" stop-color="#123a68" /></radialGradient></defs><circle cx="20" cy="20" r="18" fill="url(#orb)" stroke="#9cc4e0" /><ellipse cx="20" cy="11" rx="14" ry="8" fill="#fff" opacity=".35" /><path d="M11 13Q15 10 19 12L18 19Q14 17 10 20z" fill="#f0602a" /><path d="M21 12Q25 15 30 12L28 20Q24 22 20 20z" fill="#8cc63e" /><path d="M10 22Q14 19 17.500 21L16 28Q12 26 8.500 29z" fill="#3aa0e8" /><path d="M19.500 22Q23 24 27.500 22L26 29Q22 32 18 29z" fill="#fdc82a" /></svg>
      </button>
      <button type="button" class="task plain explorer" aria-label="Explorador">
        <svg viewBox="0 0 40 40"><path d="M5 6H16L18 9H34V34H5z" fill="#e9cf7c" stroke="#b3913d" /><path d="M7 8h8v3H7zM17 8h7v3h-7zM26 9h7v3h-7z" fill="#fff" /><path d="M8 8h3v2H8z" fill="#2a9a2a" /><path d="M18 8h3v2h-3z" fill="#d33" /><path d="M27 9h3v2h-3z" fill="#36c" /><path d="M4 12H35L34 35H6z" fill="#fbe9a6" stroke="#c9a64c" /><path d="M10 37V29Q10 26 13 26H28Q31 26 31 29V37H27V31H14V37z" fill="#a7d8f2" stroke="#5a9cc4" /></svg>
      </button>
      <button type="button" class="task stacked" aria-label="Chrome">
        <svg viewBox="0 0 40 40"><circle cx="18" cy="20" r="14" fill="#4caf50" /><path d="M6 12.500A14 14 0 0 1 30 12.500L31 15H18L12 23z" fill="#dd4b39" /><path d="M31 15A14 14 0 0 1 17 34L24 23 23 15z" fill="#fdd23e" /><circle cx="18" cy="20" r="7" fill="#fff" /><circle cx="18" cy="20" r="5" fill="#3f86e8" /></svg>
      </button>
      <button type="button" class="task open" aria-label="Sublime Text">
        <svg viewBox="0 0 40 40"><path d="M6 10H34L36 33Q20 36 4 33z" fill="#aaa" stroke="#555" /><path d="M9 5H31L33 28Q20 31 7 28z" fill="#3c3c3c" stroke="#222" /><path d="M24 11H18Q15 11 15 13.500T18 16H21Q24 16 24 18.500T21 21H15" fill="none" stroke="#f59a23" stroke-width="3" /></svg>
      </button>
      <button type="button" class="task plain glow" aria-label="Mozilla Firefox">
        <svg viewBox="0 0 40 40"><circle cx="21" cy="19" r="14" fill="#2a64b8" /><path d="M16 7Q23 3 30 9L28 15 21 18z" fill="#4fb2e8" /><path d="M8 8Q9 11 12 11 16 9 19 11L16 15Q22 16 20 19L16 20Q17 25 23 25 30 24 31 16L30 12Q36 18 34 26 29 36 19 35 8 33 5 23 4 14 8 8z" fill="#ee6b1e" /><path d="M34 15Q37 24 31 31 34 22 31 16L32 12z" fill="#ffd13b" /></svg>
      </button>
      <button type="button" class="task open current" aria-label="Rhinoceros">
        <svg viewBox="0 0 40 40"><path d="M4 4H36V36H4z" fill="#0b0b0b" /><path d="M5 12L9 14 13 12 16 14 19 6 21 13 25 14 24 19 29 21 35 11 33 22 32 30 25 28 21 24 16 25 9 20z" fill="#ddd" /><path d="M13 15L17 17 15 19zM21 20L29 27 25 28z" fill="#222" /><path d="M14 27L20 35 17 36H12zM22 28L33 32V36H25z" fill="#777" /><path d="M9 24l2 3" stroke="#d22" stroke-width="2" /></svg>
      </button>
      <div class="tray">
        <span class="lang">ES</span>
        <svg class="keyb" viewBox="0 0 16 18" aria-hidden="true"><path d="M5 5Q7 1 10 3T15 1" fill="none" stroke="#ccc" /><rect x=".5" y="7.500" width="15" height="8" rx="1" fill="#888" stroke="#ddd" /><path d="M2 10h12M2 12.500h12" stroke="#eee" stroke-dasharray="1.500 1" /></svg>
        <svg class="up" viewBox="0 0 8 5" aria-hidden="true"><path d="M4 0L8 4H0z" fill="#fff" /></svg>
        <svg class="plug" viewBox="0 0 16 18" aria-hidden="true"><path d="M2.500 3.500H8.500V16.500H2.500zM4.500 1.500H6.500" fill="none" stroke="#fff" stroke-width="2" /><path d="M7 5H14V10Q14 12 11.500 12V16" fill="#fff" stroke="#fff" /><path d="M8.500 2V5M12.500 2V5" stroke="#fff" /></svg>
        <svg class="bars" viewBox="0 0 16 14" aria-hidden="true"><path d="M1 11h2v2H1zM4 9h2v4H4zM7 6h2v7H7zM10 3h2v10h-2zM13 0h2v13h-2z" fill="#fff" /></svg>
        <svg class="vol" viewBox="0 0 16 16" aria-hidden="true"><path d="M1 5H4L8 1V15L4 11H1z" fill="#fff" /><path d="M10 5Q12 8 10 11M12 3Q16 8 12 13" fill="none" stroke="#fff" /></svg>
        <div class="clock"><span>09:24 p.m.</span><span>31/07/2014</span></div>
        <button type="button" class="desktop" aria-label="Mostrar escritorio"></button>
      </div>
    </footer>
  </div>
</template>

<style>
body { margin: 0; }
</style>

<style scoped>
.app {
  --ui: "Open Sans", "Noto Sans", sans-serif;
  --sans: "Liberation Sans", Arial, sans-serif;
  --edge: #a3a7b8;
  --base: #dfe2eb;
  display: flex;
  flex-direction: column;
  height: 100vh;
  overflow: hidden;
  background: var(--base);
  color: #000;
  font: 11px/14px var(--sans);
}
.app * { box-sizing: border-box; }
.defs { position: absolute; }
button, input, select { font: inherit; color: inherit; margin: 0; padding: 0; border: 0; background: none; border-radius: 0; }
button { white-space: nowrap; }
svg { display: block; }

.titlebar {
  flex: none;
  display: flex;
  align-items: center;
  height: 22px;
  padding-right: 2px;
  border-bottom: 1px solid #1b2c52;
  background: linear-gradient(90deg, #8fb0db 0, #86a9d8 30%, #2f69b4 36%, #2b5fae 60%, #2a62b0 76%, #0c55a8 84%, #3f79bd 91%, #5a8fc8 100%);
}
.app-icon { width: 16px; height: 16px; }
h1 { flex: 1; margin: 0 0 0 6px; font: 12px/20px var(--ui); white-space: nowrap; }
.win-buttons { display: flex; align-self: flex-start; height: 18px; border: 1px solid #2b3d5c; border-top: 0; border-radius: 0 0 5px 5px; overflow: hidden; box-shadow: 0 0 0 1px #9dbbe0; }
.win-buttons button { width: 27px; background: linear-gradient(#b9c9de 0, #93a9c8 45%, #5c7ba8 50%, #7b9bc6 100%); border-right: 1px solid #2b3d5c; }
.win-buttons svg { height: 17px; margin: auto; }
.win-buttons .close { width: 47px; border: 0; background: linear-gradient(#e0a090 0, #cf6a52 45%, #ad2a12 50%, #d0583a 100%); }

.menu {
  flex: none;
  display: grid;
  grid-template-columns: 55px 53px 39px 45px 66px 47px 43px 68px 79px 85px 54px 79px 54px 1fr;
  height: 19px;
  padding-left: 7px;
  border-bottom: 1px solid #b5bbcb;
  background: linear-gradient(#fdfdfe 0, #eef0f7 35%, #d8deef 40%, #dde2f2 100%);
  font: 11px/19px var(--ui);
}
.menu button { text-align: left; }
.menu .key { text-decoration: underline; }

.command { flex: none; margin: 4px 3px 4px 3px; padding-left: 2px; border-left: 1px solid #b8bcc9; box-shadow: inset 2px 0 0 #eef0f5; font: 12px/17px var(--sans); }
.history, .prompt { display: flex; align-items: center; height: 17px; padding-left: 2px; background: #fff; }
.prompt { height: 18px; border-top: 1px solid #9a9eaf; }
.prompt label { font-weight: 700; }
.prompt input { flex: 1; min-width: 0; outline: 0; padding-left: 4px; }
.history svg { margin-left: auto; }
.command svg { flex: none; width: 14px; height: 17px; }

.toolbar { flex: none; height: 59px; border-top: 1px solid #b9bdca; background: linear-gradient(#dfe2eb 19px, #f6f7fa 20px, #dfe2ea 100%); }
.tool-tabs { display: flex; align-items: flex-end; height: 20px; padding: 0 1px 0 8px; border-bottom: 1px solid #a3a7b8; }
.tab { position: relative; flex: none; display: flex; align-items: center; text-align: left; }
.tab span { position: relative; }
.tab-shape { position: absolute; inset: 0; width: 100%; height: 100%; overflow: visible; }
.tab-shape path { fill: #d3d9ea; stroke: var(--edge); }
.tab-shape .plus { fill: #f2f3f6; stroke: #777; }
.active .tab-shape path { fill: #f7f8fb; }
.tool-tabs .tab { height: 16px; padding-left: 7px; }
.tool-tabs .active, .panel-tabs .active { z-index: 1; }
.gear { margin-left: auto; width: 16px; }
.gear svg { width: 16px; height: 16px; }
.tools { display: flex; height: 37px; margin-left: 3px; padding-left: 2px; border-left: 1px solid #bfc3cf; }
.tool { flex: none; width: 28px; height: 28px; }
.tool svg { width: 28px; height: 28px; overflow: visible; }
.side-tools .tool, .tools .tool { display: block; }

.work { flex: 1; min-height: 0; display: flex; }
.side-tools { flex: none; width: 64px; padding: 3px 5px 0 1px; }
.side-grid { display: grid; grid-template-columns: 28px 28px; padding-top: 1px; border-top: 3px double #a9aebf; }
.center { flex: 1; min-width: 0; display: flex; flex-direction: column; }
.viewport { position: relative; flex: 1; min-height: 0; background: #9da3ab; border: 1px solid #9296a0; }
.scene { position: absolute; inset: -1px; width: calc(100% + 2px); height: calc(100% + 2px); }
.scene path { fill: none; shape-rendering: crispEdges; }
.wire { stroke: #000; stroke-width: 1; }
.wire.bold { stroke-width: 2; }
.wire.dash { stroke-dasharray: 5 7; }
.wire.fall { stroke-dasharray: 8 5; }
.wire.long { stroke-dasharray: 11 2; }
.wire.dots { stroke-dasharray: 1 4; }
.wire.tight { stroke-dasharray: 1 1; }
.major { stroke: #878b93; }
.minor { stroke: #949aa2; }
.axis { stroke: #5c5f64; }
.axis-label { font: 14px "DejaVu Sans", sans-serif; fill: #54575c; }
.view-title { position: absolute; left: 0; top: 0; display: flex; align-items: center; width: 87px; height: 18px; padding-left: 8px; background: #87a3c2; font: 11px/18px var(--ui); }
.view-title span { flex: 1; text-align: left; }
.view-title svg { width: 11px; height: 18px; }
.view-tabs { flex: none; display: flex; height: 29px; padding-bottom: 7px; }
.view-tabs .tab { height: 22px; padding-left: 11px; }
.view-tabs .active .tab-shape path { fill: #fff; }

.panel { flex: none; width: 341px; display: flex; flex-direction: column; padding: 3px 0 11px 7px; }
.panel-tabs { position: relative; flex: none; display: flex; align-items: flex-end; height: 26px; border-top: 3px double #a9aebf; }
.panel-tabs .tab { height: 21px; gap: 3px; padding-left: 4px; overflow: visible; }
.panel-tabs .tab-icon { position: relative; z-index: 2; flex: none; width: 16px; height: 16px; }
.panel-body { flex: 1; min-height: 0; padding: 7px 7px 0 3px; border: 1px solid var(--edge); background: #f6f7fa; }
table { width: 100%; border-collapse: collapse; table-layout: fixed; border: 1px solid #dfe2ea; }
.c-gutter { width: 9px; }
.c-name { width: 152px; }
th, td { padding: 0; height: 19px; border-bottom: 1px solid #dfe2ea; background: #fff; font-weight: 400; text-align: left; vertical-align: middle; }
.section th { height: 23px; padding-left: 3px; background: #f6f7fa; }
tbody:first-of-type .section th { height: 22px; }
th[scope="row"] { padding-left: 3px; }
.gutter { background: #f6f7fa; }
.value { border-left: 1px solid #dfe2ea; }
.value > *, .file input, .drop select { display: block; width: 100%; height: 18px; }
.value input[type="text"] { padding-left: 4px; line-height: 18px; }
.off { color: #7b7b7b; }
.off .value { background: #dfe2ea; }
.push, .value .push { width: auto; height: 17px; border: 1px solid #6f6f6f; border-radius: 3px; background: linear-gradient(#f3f3f3 0, #ebebeb 48%, #d8d8d8 52%, #cdcdcd 100%); line-height: 14px; text-align: center; }
.value > .push { width: calc(100% - 2px); margin-left: 1px; }
.value > .file { display: flex; align-items: center; gap: 2px; }
.file input { flex: 1; min-width: 0; }
.value .file input { padding-left: 2px; }
.file .push { flex: none; width: 17px; margin-right: 1px; }
.drop { position: relative; }
.drop::before { content: ""; position: absolute; right: 0; top: 0; width: 17px; height: 18px; border: solid #777; border-width: 1px 0 0 1px; background: linear-gradient(#f4f4f4, #dadada); pointer-events: none; }
.drop::after { content: ""; position: absolute; right: 4px; top: 8px; border: 4px solid transparent; border-top-color: #000; border-bottom: 0; pointer-events: none; }
.drop select { appearance: none; padding-left: 3px; }
.tick { appearance: none; flex: none; width: 13px; height: 13px; border: 1px solid #8e8f8f; background: linear-gradient(135deg, #c9ccd2 0, #f6f6f6 80%); box-shadow: inset 0 0 0 1px #f4f4f4; }
.value .tick { width: 13px; height: 13px; margin-left: 4px; }
.tick:checked::before { content: ""; display: block; width: 4px; height: 7px; margin: 0 auto; border: solid #31479e; border-width: 0 2px 2px 0; transform: rotate(38deg); }

.snaps {
  flex: none;
  display: grid;
  grid-template-columns: 39px 53px 53px 46px 44px 37px 47px 44px 51px 50px 57px 71px 1fr;
  align-items: center;
  height: 18px;
  margin: 0 0 3px 3px;
  padding-left: 7px;
  border-left: 1px solid #b8bcc9;
  box-shadow: inset 2px 0 0 #eef0f5;
}
.snaps label { display: flex; align-items: center; gap: 5px; white-space: nowrap; }
.pushbox { appearance: none; width: 14px; height: 14px; border: 1px solid #777; border-radius: 3px; background: linear-gradient(#f6f6f6, #d6d6d6); }

.status {
  position: relative;
  flex: none;
  display: grid;
  grid-template-columns: 57fr 88fr 88fr 88fr 88fr 173fr 134fr 38fr 55fr 56fr 84fr 67fr 113fr 50fr 94fr 7fr;
  height: 20px;
  border-top: 1px solid #8c90a0;
  font-size: 12px;
}
.status button { min-width: 0; border-right: 1px solid var(--edge); text-align: center; }
.status .on { background: #e3f4fd; font-weight: 700; }
.status .layer { display: flex; align-items: center; gap: 2px; padding-left: 3px; }
.swatch { width: 14px; height: 14px; background: #000; }
.tip { position: absolute; left: 231px; top: -1px; width: 89px; height: 20px; border: 1px solid #767676; border-radius: 3px; background: linear-gradient(#fff, #e4e5f0); box-shadow: 1px 1px 2px #555; color: #555; font: 11px/18px var(--ui); text-align: center; white-space: nowrap; }

.taskbar {
  flex: none;
  display: flex;
  height: 40px;
  border-top: 1px solid #10284c;
  box-shadow: inset 0 1px 0 #5a83b5;
  background:
    linear-gradient(90deg, transparent 1000px, #0b3a70 1060px),
    linear-gradient(60deg, #063e80 0, #064a94 25%, #0c59a8 32%, #07509c 40%, #074e9a 52%, #105ba8 54%, #0b56a4 60%, #064a94 63%, #0a529f 80%, #063c78 100%);
}
.start { width: 54px; padding-left: 7px; }
.taskbar svg { width: 40px; height: 40px; }
.task { width: 58px; height: 39px; margin-right: 4px; border: 1px solid transparent; border-radius: 3px; }
.task svg { margin: -1px auto 0; }
.explorer { margin: 0 6px; }
.stacked { width: 56px; margin-right: 6px; border-color: #9ab8dc; background: linear-gradient(#5f88bd, #1e5ca0); box-shadow: inset -4px 0 0 #2f62a2, inset -5px 0 0 #a8c3e2; }
.open { border-color: #b0c8e4; background: linear-gradient(#6d91c0, #2a64a5); }
.current { background: linear-gradient(135deg, #dfe8f2, #8eafd2); border-color: #e8f0f8; }
.glow { background: radial-gradient(ellipse at 50% 110%, #4fa8f0 0, transparent 45%); }
.tray { display: flex; align-items: center; margin-left: auto; color: #fff; font: 11px/17px var(--ui); }
.tray svg { flex: none; }
.tray .keyb { width: 16px; height: 18px; margin-left: 10px; }
.tray .up { width: 8px; height: 5px; margin: 4px 12px 0 13px; }
.tray .plug { width: 16px; height: 18px; margin-right: 10px; }
.tray .bars { width: 16px; height: 14px; margin-right: 8px; }
.tray .vol { width: 16px; height: 16px; }
.clock { display: flex; flex-direction: column; align-items: center; width: 82px; margin-left: 6px; }
.desktop { width: 14px; height: 38px; border: 1px solid #6f95c2; background: linear-gradient(#7d9dc4, #0a3f7c 50%, #2a6bb0); }
</style>
